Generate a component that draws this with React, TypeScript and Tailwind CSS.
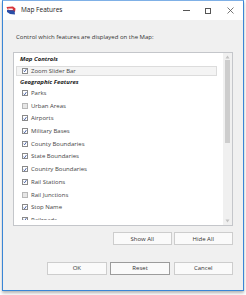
import React from 'react'

type Row = { kind: 'head'; label: string; h: string } | { kind: 'item'; label: string; checked: boolean; selected?: boolean }

const rows: Row[] = [
  { kind: 'head', label: 'Map Controls', h: 'h-[11.5px]' },
  { kind: 'item', label: 'Zoom Slider Bar', checked: true, selected: true },
  { kind: 'head', label: 'Geographic Features', h: 'h-[9.5px]' },
  { kind: 'item', label: 'Parks', checked: true },
  { kind: 'item', label: 'Urban Areas', checked: false },
  { kind: 'item', label: 'Airports', checked: true },
  { kind: 'item', label: 'Military Bases', checked: true },
  { kind: 'item', label: 'County Boundaries', checked: true },
  { kind: 'item', label: 'State Boundaries', checked: true },
  { kind: 'item', label: 'Country Boundaries', checked: true },
  { kind: 'item', label: 'Rail Stations', checked: true },
  { kind: 'item', label: 'Rail Junctions', checked: false },
  { kind: 'item', label: 'Stop Name', checked: true },
  { kind: 'item', label: 'Railroads', checked: true },
]

const CheckBox = ({ checked }: { checked: boolean }) => (
  <span
    className={`w-[6px] h-[6px] shrink-0 border flex items-center justify-center ${
      checked ? 'bg-white border-[#8a8a8a]' : 'bg-[#e6e6e6] border-[#b8b8b8]'
    }`}
  >
    {checked && (
      <svg width="5" height="5" viewBox="0 0 10 10">
        <path d="M1.5 5.5 L4 8 L8.5 1.5" fill="none" stroke="#1f3f91" strokeWidth="2" />
      </svg>
    )}
  </span>
)

const Button = ({ label, primary }: { label: string; primary?: boolean }) => (
  <button
    className={`w-[59.5px] h-full flex items-center justify-center bg-[#fafafa] border text-[#333] ${
      primary ? 'border-[#9c9c9c]' : 'border-[#cdcdcd]'
    }`}
  >
    {label}
  </button>
)

const App = () => {
  return (
    <div className="w-[246px] h-[295px] bg-white pl-[2px] font-['Open_Sans',sans-serif] text-[6px] leading-none">
      <div className="w-[242px] h-[291px] border border-[#3a86d6] border-t-[#7fb0e6] flex flex-col shadow-[0_2px_3px_rgba(0,0,0,0.3)]">
        {/* Title bar */}
        <div className="h-[19px] shrink-0 bg-white flex items-center text-[#222] text-[6.5px]">
          <svg className="ml-[3px]" width="10" height="9" viewBox="0 0 10 9">
            <path d="M0.5 1 L7 0.5 L9.5 2.5 L9 6 L3 6.5 Z" fill="#d8343a" />
            <path d="M1 4 L8.5 4.5 L9 8.5 L4 8 L1 6 Z" fill="#2a4fa8" />
            <path d="M2 2.5 L6.5 2.5 L7 4 L2.5 4 Z" fill="#f3f3f3" />
          </svg>
          <span className="ml-[5px]">Map Features</span>
          <div className="ml-auto flex items-center">
            <span className="w-[7px] h-[1px] bg-[#555] mr-[15px]" />
            <span className="w-[6px] h-[6px] border border-[#555] mr-[16px]" />
            <svg className="mr-[9px]" width="7" height="7" viewBox="0 0 7 7">
              <path d="M0.5 0.5 L6.5 6.5 M6.5 0.5 L0.5 6.5" stroke="#555" strokeWidth="0.8" />
            </svg>
          </div>
        </div>

        {/* Content */}
        <div className="flex-1 bg-[#f0f0f0] px-[10px] flex flex-col text-[#333]">
          <div className="pt-[12.5px] h-[22px] pl-[3px] flex items-center">
            Control which features are displayed on the Map:
          </div>

          <div className="mt-[10px] h-[174px] bg-white border border-[#c4c6ca] flex">
            <div className="flex-1 flex flex-col">
              <div className="h-[167px] overflow-hidden flex flex-col">
                {rows.map((r) =>
                  r.kind === 'head' ? (
                    <div key={r.label} className={`${r.h} shrink-0 pl-[6px] flex items-center font-bold italic text-[#222]`}>
                      {r.label}
                    </div>
                  ) : (
                    <div key={r.label} className="h-[12.7px] shrink-0 py-[1px] pl-[2px] pr-[6px] flex">
                      <div
                        className={`flex-1 flex items-center gap-[3px] pl-[5px] border ${
                          r.selected ? 'bg-[#f4f4f4] border-[#dcdcdc]' : 'border-transparent'
                        }`}
                      >
                        <CheckBox checked={r.checked} />
                        <span className="text-[#444]">{r.label}</span>
                      </div>
                    </div>
                  )
                )}
              </div>
            </div>
            {/* Scrollbar */}
            <div className="w-[9px] bg-[#f0f0f0] flex flex-col items-center">
              <svg className="mt-[2px]" width="5" height="4" viewBox="0 0 5 4">
                <path d="M2.5 0.5 L4.5 3.5 L0.5 3.5 Z" fill="#c2c2c2" />
              </svg>
              <div className="mt-[1px] w-[5px] h-[83px] bg-[#cdcdcd]" />
              <svg className="mt-auto mb-[2px]" width="5" height="4" viewBox="0 0 5 4">
                <path d="M0.5 0.5 L4.5 0.5 L2.5 3.5 Z" fill="#c2c2c2" />
              </svg>
            </div>
          </div>

          <div className="mt-[6px] h-[13px] flex justify-end gap-[1.5px]">
            <Button label="Show All" />
            <Button label="Hide All" />
          </div>

          <div className="mt-[17px] h-[12.5px] flex justify-end gap-[3.7px]">
            <Button label="OK" />
            <Button label="Reset" primary />
            <Button label="Cancel" />
          </div>
        </div>
      </div>
    </div>
  )
}

export default App
